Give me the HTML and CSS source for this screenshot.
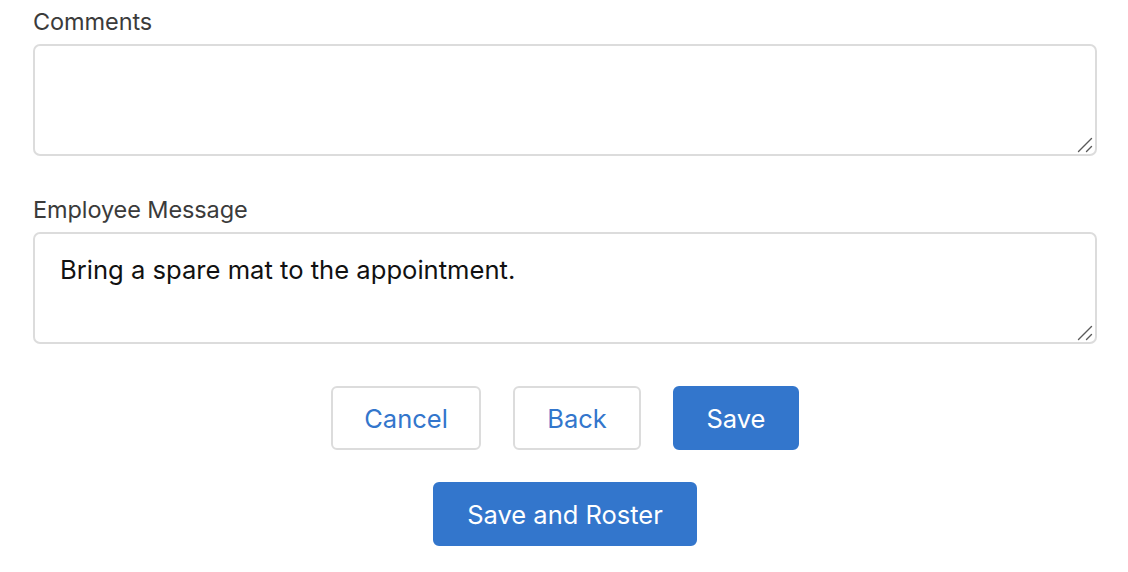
FILE: index.html
```html
<!DOCTYPE html>
<html>
<head>
<meta charset="utf-8">
<link rel="stylesheet" href="styles.css">
</head>
<body>
<div class="form">
  <div class="field">
    <label class="label">Comments</label>
    <div class="input-wrap">
      <textarea class="input"></textarea>
      <svg class="grip" width="16" height="16" viewBox="0 0 16 16"><path d="M1.5 14.5 L14.5 1.5 M9.5 14.5 L14.5 9.5" stroke="#5a5a5a" stroke-width="1.4" stroke-linecap="round" fill="none"/></svg>
    </div>
  </div>
  <div class="field">
    <label class="label">Employee Message</label>
    <div class="input-wrap">
      <textarea class="input">Bring a spare mat to the appointment.</textarea>
      <svg class="grip" width="16" height="16" viewBox="0 0 16 16"><path d="M1.5 14.5 L14.5 1.5 M9.5 14.5 L14.5 9.5" stroke="#5a5a5a" stroke-width="1.4" stroke-linecap="round" fill="none"/></svg>
    </div>
  </div>
  <div class="actions">
    <div class="row">
      <button class="btn btn-outline btn-cancel">Cancel</button>
      <button class="btn btn-outline btn-back">Back</button>
      <button class="btn btn-primary btn-save">Save</button>
    </div>
    <div class="row">
      <button class="btn btn-primary btn-roster">Save and Roster</button>
    </div>
  </div>
</div>
</body>
</html>
```
FILE: styles.css
```css
* { box-sizing: border-box; }
html, body { margin: 0; padding: 0; background: #fff; }
body { font-family: Inter, "Noto Sans", sans-serif; }
.form {
  padding: 8px 31px 0 33px;
  display: flex;
  flex-direction: column;
}
.field {
  display: flex;
  flex-direction: column;
  margin-bottom: 40px;
}
.field:nth-child(2) { margin-bottom: 42px; }
.label {
  font-size: 23.5px;
  line-height: 28px;
  color: #3b3b3b;
  margin-bottom: 8px;
  letter-spacing: -0.1px;
}
.input-wrap {
  position: relative;
  height: 112px;
}
.input {
  display: block;
  width: 100%;
  height: 112px;
  border: 2px solid #dcdcdc;
  border-radius: 7px;
  padding: 19px 25px;
  font-family: Inter, "Noto Sans", sans-serif;
  font-size: 25.6px;
  line-height: 34px;
  color: #111;
  resize: none;
  outline: none;
}
.grip {
  position: absolute;
  right: 4px;
  bottom: 3px;
  pointer-events: none;
}
.actions {
  display: flex;
  flex-direction: column;
  align-items: center;
  gap: 32px;
}
.row {
  display: flex;
  gap: 32px;
  justify-content: center;
}
.btn {
  height: 64px;
  border-radius: 6px;
  font-family: Inter, "Noto Sans", sans-serif;
  font-size: 25.5px;
  cursor: pointer;
  padding: 0;
}
.btn-outline {
  background: #fff;
  border: 2px solid #dcdcdc;
  color: #3376cc;
}
.btn-primary {
  background: #3376cc;
  border: 2px solid #3376cc;
  color: #fff;
}
.btn-cancel { width: 150px; }
.btn-back { width: 128px; }
.btn-save { width: 126px; }
.btn-roster { width: 264px; }
```
